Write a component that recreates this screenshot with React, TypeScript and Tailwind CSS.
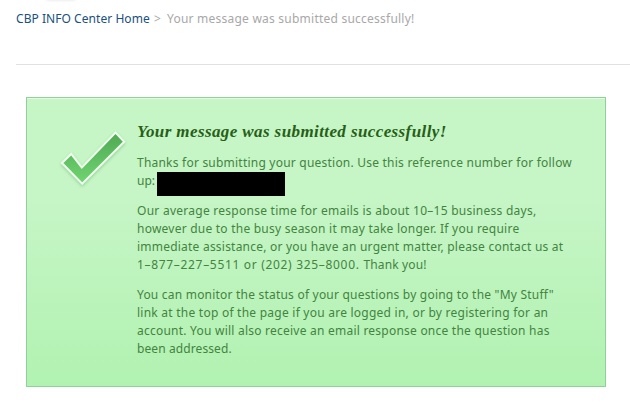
import React from "react";
import clsx from "clsx";

type Line = { text: string; tracking: string };

const AVERAGE_RESPONSE: Line[] = [
  { text: "Our average response time for emails is about 10–15 business days,", tracking: "tracking-[0.26px]" },
  { text: "however due to the busy season it may take longer. If you require", tracking: "tracking-[0.23px]" },
  { text: "immediate assistance, or you have an urgent matter, please contact us at", tracking: "tracking-[0.22px]" },
];

const MONITOR_STATUS: Line[] = [
  { text: "You can monitor the status of your questions by going to the \"My Stuff\"", tracking: "tracking-[0.21px]" },
  { text: "link at the top of the page if you are logged in, or by registering for an", tracking: "tracking-[0.24px]" },
  { text: "account. You will also receive an email response once the question has", tracking: "tracking-[0.23px]" },
  { text: "been addressed.", tracking: "tracking-[0.1px]" },
];

const Paragraph: React.FC<{ lines: Line[]; children?: React.ReactNode }> = ({ lines, children }) => (
  <p className="mt-3">
    {lines.map((line) => (
      <span key={line.text} className={clsx("block whitespace-nowrap", line.tracking)}>
        {line.text}
      </span>
    ))}
    {children}
  </p>
);

const CheckMark: React.FC = () => (
  <svg viewBox="0 0 72 64" className="w-[72px] h-16 shrink-0 overflow-visible" aria-hidden="true">
    <defs>
      <linearGradient id="check" x1="0" y1="0" x2="0" y2="1">
        <stop offset="0" stopColor="#50a953" />
        <stop offset="1" stopColor="#70d571" />
      </linearGradient>
      <filter id="shadow" x="-20%" y="-20%" width="140%" height="150%">
        <feDropShadow dx="0" dy="1.5" stdDeviation="1.6" floodColor="#4b9a50" floodOpacity="0.4" />
      </filter>
    </defs>
    <path
      d="M6 38 15.2 29 25.8 42.6 59.5 7.6 68.2 16.7 26.2 58.6Z"
      fill="url(#check)"
      stroke="#effcef"
      strokeWidth="2"
      filter="url(#shadow)"
    />
  </svg>
);

export default function App() {
  return (
    <div className="relative w-[630px] h-[419px] overflow-hidden bg-white font-['Noto_Sans',sans-serif] text-[12px] leading-[18px]">
      {/* Bottom edge of the logo shadow above the breadcrumb */}
      <div className="absolute left-[46px] -top-[5px] w-[30px] h-[6px] rounded-full bg-[#ededed] blur-[1px]" />

      <nav className="flex ml-4 pt-[10px] h-16 whitespace-nowrap text-[#a8a8a8]">
        <a className="w-[138px] text-[#205080] tracking-[0.05px]">CBP INFO Center Home</a>
        <span className="w-[13px]">&gt;</span>
        <span className="tracking-[0.23px]">Your message was submitted successfully!</span>
      </nav>
      <hr className="ml-4 border-0 h-px bg-[#e1e1e1]" />

      <section className="flex mt-8 ml-[26px] w-[580px] h-[290px] border border-[#90d19b] bg-linear-to-b from-[#c6f5c6] from-35% to-[#b1f2b1] shadow-[inset_0_1px_0_#e3fae3] pl-[29px] pt-[27px] text-[#43843f]">
        <CheckMark />
        <div className="ml-[9px] -mt-[3px]">
          <h1 className="h-[20px] leading-[20px] whitespace-nowrap font-['Liberation_Serif',serif] text-[17px] font-bold italic text-[#275f17] tracking-[0.4px]">
            Your message was submitted successfully!
          </h1>
          <p className="mt-3">
            <span className="block whitespace-nowrap tracking-[0.22px]">
              Thanks for submitting your question. Use this reference number for follow
            </span>
            <span className="flex h-[18px]">
              <span className="w-5">up:</span>
              <span className="w-32 h-6 bg-black" />
            </span>
          </p>
          <Paragraph lines={AVERAGE_RESPONSE}>
            <span className="block whitespace-nowrap tracking-[0.14px]">
              <span className="tracking-[0.68px]">1–877–227–5511 or (202) 325–8000. </span>
              Thank you!
            </span>
          </Paragraph>
          <Paragraph lines={MONITOR_STATUS} />
        </div>
      </section>
    </div>
  );
}
